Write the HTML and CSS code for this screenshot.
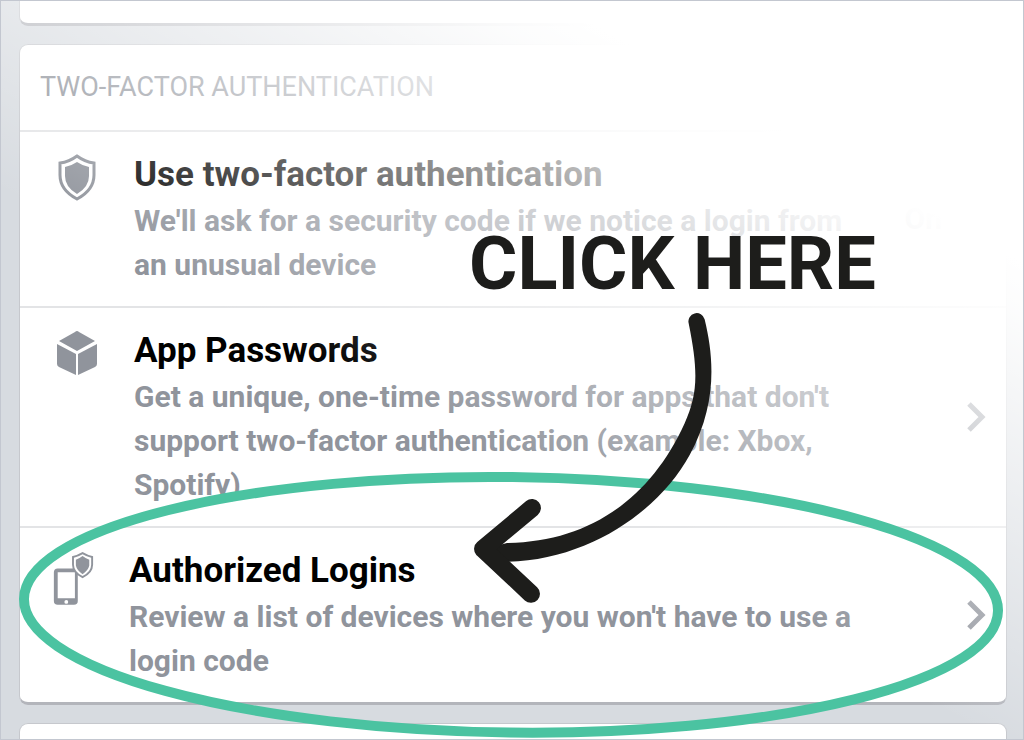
FILE: index.html
```
<!DOCTYPE html>
<html lang="en">
<head>
    <meta charset="utf-8">
    <title>Two-Factor Authentication</title>
    <link rel="stylesheet" href="styles.css">
</head>
<body>
    <div class="page">
        <div class="card card-first"></div>

        <main class="card">
            <h1>TWO-FACTOR AUTHENTICATION</h1>

            <a class="item" href="#">
                <svg class="icon" viewBox="0 0 44 48" aria-hidden="true">
                    <path class="outline" d="M21 3 Q29 9 38 10 V22 Q38 37 21 46 Q4 37 4 22 V10 Q13 9 21 3 Z"/>
                    <path d="M21 9 Q27 13 33 14 V23 Q33 34 21 41 Q9 34 9 23 V14 Q15 13 21 9 Z"/>
                </svg>
                <div class="text">
                    <h2>Use two-factor authentication</h2>
                    <p>We'll ask for a security code if we notice a login from an unusual device</p>
                </div>
                <span class="status">On</span>
                <svg class="chevron" viewBox="0 0 20 32" aria-hidden="true"><path d="M3 3 L16 16 L3 29"/></svg>
            </a>

            <a class="item" href="#">
                <svg class="icon" viewBox="0 0 44 48" aria-hidden="true">
                    <path d="M21 2 Q22 2 23 3 L39 12 L21 22 L3 12 L19 3 Q20 2 21 2 Z"/>
                    <path d="M1 15 L20 25 V46 L3 38 Q1 37 1 35 Z"/>
                    <path d="M41 15 L22 25 V46 L39 38 Q41 37 41 35 Z"/>
                </svg>
                <div class="text">
                    <h2>App Passwords</h2>
                    <p>Get a unique, one-time password for apps that don't support two-factor authentication (example: Xbox, Spotify)</p>
                </div>
                <svg class="chevron" viewBox="0 0 20 32" aria-hidden="true"><path d="M3 3 L16 16 L3 29"/></svg>
            </a>

            <a class="item item-device" href="#">
                <svg class="icon icon-device" viewBox="0 0 46 60" aria-hidden="true">
                    <path fill-rule="evenodd" d="M7 19 H24 Q28 19 28 23 V53 Q28 57 24 57 H7 Q3 57 3 53 V23 Q3 19 7 19 Z M7 23 V50 H25 V23 Z"/>
                    <circle class="light" cx="16" cy="54" r="2"/>
                    <path class="badge" d="M33 3 Q38 6 43 7 V15 Q43 23 33 28 Q23 23 23 15 V7 Q28 6 33 3 Z"/>
                    <path d="M33 6 Q37 9 40 10 V16 Q39 21 33 25 Q27 21 26 16 V10 Q29 9 33 6 Z"/>
                </svg>
                <div class="text">
                    <h2>Authorized Logins</h2>
                    <p>Review a list of devices where you won't have to use a login code</p>
                </div>
                <svg class="chevron" viewBox="0 0 20 32" aria-hidden="true"><path d="M3 3 L16 16 L3 29"/></svg>
            </a>
        </main>

        <div class="card card-last"></div>

        <div class="fade"></div>

        <!-- hint drawn over the list -->
        <svg class="hint" viewBox="0 0 1024 740" aria-hidden="true">
            <ellipse class="ring" cx="511" cy="605" rx="488" ry="128" transform="rotate(0.7 511 605)"/>
            <path class="arrow" d="M689 323 C699 372 698 394 685 423 C650 500 588 542 507 543 L484 549 L507 562 C590 560 660 510 690 455 C717 405 715 360 705 319 A8 8 0 0 0 689 323 Z"/>
            <path class="arrow-head" d="M532 508 L483 549 L531 594"/>
        </svg>
        <strong class="hint-text">CLICK HERE</strong>
    </div>
</body>
</html>
```

FILE: styles.css
```
* {
    box-sizing: border-box;
}

body {
    margin: 0;
    font-family: Roboto, "Liberation Sans", sans-serif;
    background-color: #d7dbe0;
}

h1, h2, p {
    margin: 0;
}

.page {
    position: relative;
    display: flex;
    flex-direction: column;
    gap: 18px;
    height: 100vh;
    padding: 0 16px 0 18px;
    border: 1px solid #c3c7d0;
    overflow: hidden;
}

.card {
    flex: none;
    background-color: #fff;
    border: 1px solid #c6c8cd;
    border-bottom: 3px solid #b3b5bb;
    border-radius: 9px;
}

.card-first {
    height: 25px;
    border-top: none;
    border-top-left-radius: 0;
    border-top-right-radius: 0;
}

.card-last {
    height: 60px;
}

h1 {
    padding: 20px 20px 21px;
    font-size: 27px;
    line-height: 44px;
    font-weight: 400;
    color: #90949c;
}

.item {
    display: flex;
    align-items: center;
    padding: 19px 20px 19px 36px;
    border-top: 2px solid #e3e4e6;
    color: #90949c;
    text-decoration: none;
}

.item-device {
    padding-left: 31px;
}

.icon {
    flex: none;
    align-self: flex-start;
    width: 44px;
    height: 48px;
    margin-top: 2px;
    margin-right: 34px;
    fill: #90949c;
}

.icon-device {
    height: 60px;
}

.icon .outline {
    fill: none;
    stroke: #90949c;
    stroke-width: 3;
}

.icon .light {
    fill: #fff;
}

.icon .badge {
    fill: #fff;
    stroke: #90949c;
    stroke-width: 2;
}

.text {
    flex: 1;
    margin-right: auto;
    max-width: 740px;
}

h2 {
    font-size: 35px;
    line-height: 48px;
    font-weight: 700;
    color: #000;
}

p,
.status {
    font-size: 30px;
    line-height: 44px;
    font-weight: 700;
}

.status {
    margin-right: 24px;
}

.chevron {
    flex: none;
    width: 20px;
    height: 32px;
    fill: none;
    stroke: #90949c;
    stroke-width: 5;
}

.fade {
    position: absolute;
    inset: 0;
    background: linear-gradient(29deg, rgba(255, 255, 255, 0) 42%, rgba(255, 255, 255, 0.93) 76%, #fff 80%);
    pointer-events: none;
}

.hint {
    position: absolute;
    top: 0;
    left: 0;
    width: 100%;
    pointer-events: none;
}

.ring {
    fill: none;
    stroke: #4bc3a1;
    stroke-width: 10;
}

.arrow {
    fill: #1d1d1b;
}

.arrow-head {
    fill: none;
    stroke: #1d1d1b;
    stroke-width: 18;
    stroke-linecap: round;
    stroke-linejoin: round;
}

.hint-text {
    position: absolute;
    top: 223px;
    left: 468px;
    font-size: 74px;
    line-height: 80px;
    font-weight: 700;
    color: #1d1d1b;
    pointer-events: none;
}
```
